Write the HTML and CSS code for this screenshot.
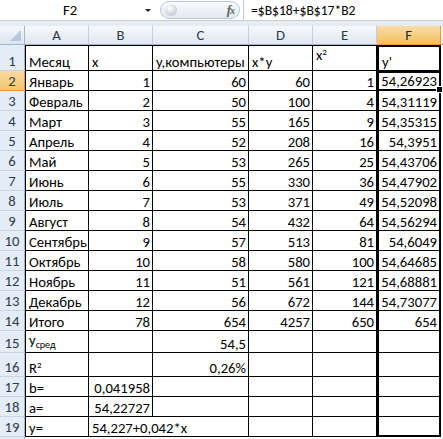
FILE: index.html
```html
<!DOCTYPE html>
<html lang="ru">
<head>
  <meta charset="UTF-8" />
  <title>Регрессия</title>
  <link rel="stylesheet" href="styles.css">
</head>
<body>

<div class="formula-bar">
  <div class="name-box">
    <span class="name">F2</span>
    <span class="drop"></span>
  </div>
  <div class="fx-zone">
    <div class="pill">
      <span class="knob"></span>
      <span class="fx">f<i>x</i></span>
    </div>
  </div>
  <div class="formula">=$B$18+$B$17*B2</div>
</div>
<div class="band"></div>

<div id="sheet" class="sheet"></div>

<script>
  const sheet = document.getElementById('sheet');
  const cols = ['A', 'B', 'C', 'D', 'E', 'F'];

  // строки листа: текст / html, {v, span} для объединённой ячейки
  const rows = [
    ['Месяц', 'x', {v: 'y,компьютеры', cls: 'clip'}, 'x*y', {v: 'x<sup>2</sup>', cls: 'up'}, "y'"],
    ['Январь', '1', '60', '60', '1', '54,26923'],
    ['Февраль', '2', '50', '100', '4', '54,31119'],
    ['Март', '3', '55', '165', '9', '54,35315'],
    ['Апрель', '4', '52', '208', '16', '54,3951'],
    ['Май', '5', '53', '265', '25', '54,43706'],
    ['Июнь', '6', '55', '330', '36', '54,47902'],
    ['Июль', '7', '53', '371', '49', '54,52098'],
    ['Август', '8', '54', '432', '64', '54,56294'],
    ['Сентябрь', '9', '57', '513', '81', '54,6049'],
    ['Октябрь', '10', '58', '580', '100', '54,64685'],
    ['Ноябрь', '11', '51', '561', '121', '54,68881'],
    ['Декабрь', '12', '56', '672', '144', '54,73077'],
    ['Итого', '78', '654', '4257', '650', '654'],
    [{v: '<span class="ys">y</span><sub>сред</sub>', cls: 'ymid'}, '', '54,5', '', '', ''],
    ['R<sup>2</sup>', '', '0,26%', '', '', ''],
    ['b=', '0,041958', '', '', '', ''],
    ['a=', '54,22727', '', '', '', ''],
    ['y=', {v: '54,227+0,042*x', span: 2}, '', '', '']
  ];

  const isNum = s => /^-?\d+(,\d+)?%?$/.test(s);

  function cell(cls, html) {
    const d = document.createElement('div');
    d.className = cls;
    d.innerHTML = html;
    sheet.appendChild(d);
    return d;
  }

  // заголовки столбцов
  cell('corner', '');
  cols.forEach(c => cell('ch' + (c === 'F' ? ' ch-sel' : ''), c));
  cell('ch ch-rest', '');

  rows.forEach((r, i) => {
    const n = i + 1;
    cell('rh' + (n === 2 ? ' rh-sel' : ''), n);
    let col = 0;
    r.forEach(item => {
      const o = typeof item === 'string' ? {v: item} : item;
      let cls = 'cell';
      if (col === 0) cls += ' col-a';
      if (n === 1) cls += ' top';
      if (isNum(o.v)) cls += ' num';
      if (o.cls) cls += ' ' + o.cls;
      if (col === 5) cls += ' col-f';
      if (col === 5 && n === 1) cls += ' f-top';
      if (col === 5 && n === rows.length) cls += ' f-bottom';
      if (col === 5 && n === 2) cls += ' active';
      const d = cell(cls, '<span>' + o.v + '</span>');
      if (o.span) {
        d.style.gridColumn = 'span ' + o.span;
        col += o.span;
      } else {
        col++;
      }
    });
    cell('rest', '');
  });

  // край следующей строки, виден на 2px
  cell('rh', '');
  for (let c = 0; c < 7; c++) cell('rest', '');
</script>

</body>
</html>
```

FILE: styles.css
```css
  body {
    margin: 0;
    width: 443px;
    height: 439px;
    overflow: hidden;
    background: #fff;
    font-family: Calibri, Carlito, 'Liberation Sans', Arial, sans-serif;
    font-size: 14.67px;
    color: #000;
  }

  /* строка формул */
  .formula-bar {
    display: flex;
    height: 20px;
    background: #fff;
  }
  .name-box {
    width: 155px;
    display: flex;
    align-items: center;
  }
  .name {
    width: 140px;
    text-align: center;
  }
  .drop {
    width: 0;
    height: 0;
    border-left: 3px solid transparent;
    border-right: 3px solid transparent;
    border-top: 3px solid #222;
    margin-left: 5px;
  }
  .fx-zone {
    width: 88px;
    display: flex;
    align-items: center;
  }
  .pill {
    width: 80px;
    height: 18px;
    margin-left: 5px;
    box-sizing: border-box;
    border: 1px solid #b9c7d9;
    border-radius: 10px;
    background: linear-gradient(#fafbfd, #e3e8ef);
    display: flex;
    align-items: center;
    justify-content: space-between;
    padding: 0 5px 0 4px;
  }
  .knob {
    width: 12px;
    height: 12px;
    border-radius: 50%;
    background: radial-gradient(circle at 40% 35%, #fff, #c8cdd4 70%, #a9b0b9);
  }
  .fx {
    font-family: 'Liberation Serif', serif;
    font-style: italic;
    font-weight: bold;
    font-size: 13px;
    color: #5a5f66;
    letter-spacing: -1px;
  }
  .fx i {
    font-size: 10px;
  }
  .formula {
    flex-grow: 1;
    border-left: 1px solid #c5cfdc;
    padding-left: 7px;
    display: flex;
    align-items: center;
    font-size: 13.6px;
  }
  .band {
    height: 5px;
    border-top: 1px solid #c5cfdc;
    background: #e7ecf3;
  }

  /* лист */
  .sheet {
    display: grid;
    grid-template-columns: 25px 64px 64px 96px 64px 64px 64px 1fr;
    grid-template-rows: 19px 26px repeat(13, 20px) 22px 24px repeat(3, 20px) 20px;
  }
  .sheet > div {
    box-sizing: border-box;
    overflow: hidden;
    white-space: nowrap;
  }
  .corner {
    background: linear-gradient(#f4f7fb, #dce4ee);
    border-right: 1px solid #9eb6ce;
    border-bottom: 1px solid #9eb6ce;
    position: relative;
  }
  .corner::after {
    content: '';
    position: absolute;
    right: 3px;
    bottom: 3px;
    border-left: 11px solid transparent;
    border-bottom: 11px solid #b7c8dd;
  }
  .ch {
    background: linear-gradient(#f7f9fc, #e0e7f0);
    border-right: 1px solid #c0cfdf;
    border-bottom: 1px solid #9eb6ce;
    text-align: center;
    line-height: 19px;
    color: #2b3a4d;
  }
  .ch-sel {
    background: linear-gradient(#f9dca6, #f1c15f);
    border-bottom: 1px solid #f29536;
    border-right: 1px solid #f29536;
    color: #1c2a3c;
  }
  .ch-rest {
    border-right: none;
  }
  .rh {
    background: #e4ecf7;
    border-bottom: 1px solid #c5d4e6;
    border-right: 1px solid #9eb6ce;
    display: flex;
    align-items: flex-end;
    justify-content: center;
    line-height: 17px;
    color: #2b3a4d;
  }
  .rh-sel {
    background: linear-gradient(#f9d9a0, #f4c672);
    border-right: 1px solid #f29536;
    border-bottom: 1px solid #f29536;
  }
  .rest {
    background: #fff;
  }

  .cell {
    display: flex;
    align-items: flex-end;
    padding: 0 2px 0 3px;
    line-height: 16px;
    border-right: 1px solid #000;
    border-bottom: 1px solid #000;
  }
  .cell.num {
    justify-content: flex-end;
  }
  .cell.col-a {
    border-left: 1px solid #000;
  }
  .cell.top {
    border-top: 1px solid #000;
  }
  .cell.clip span {
    overflow: hidden;
  }
  .cell.up {
    padding-bottom: 7px;
  }
  .cell sup {
    font-size: 9px;
    vertical-align: 5px;
    line-height: 0;
  }
  .cell.ymid {
    padding-bottom: 2px;
  }
  .ys {
    position: relative;
    top: -2px;
  }
  .cell sub {
    font-size: 10px;
    vertical-align: -1px;
    line-height: 0;
  }

  /* выделенный столбец F */
  .cell.col-f {
    border-left: 2px solid #000;
    border-right: 2px solid #000;
  }
  .cell.f-top {
    border-top: 2px solid #000;
  }
  .cell.f-bottom {
    border-bottom: 2px solid #000;
  }
  .cell.active {
    position: relative;
    overflow: visible;
    border-top: 2px solid #000;
    border-bottom: 2px solid #000;
    box-shadow: inset 0 0 0 1px #fff;
  }
  .cell.active::after {
    content: '';
    position: absolute;
    right: -4px;
    bottom: -4px;
    width: 5px;
    height: 5px;
    background: #000;
    border: 1px solid #fff;
    z-index: 2;
  }
```
